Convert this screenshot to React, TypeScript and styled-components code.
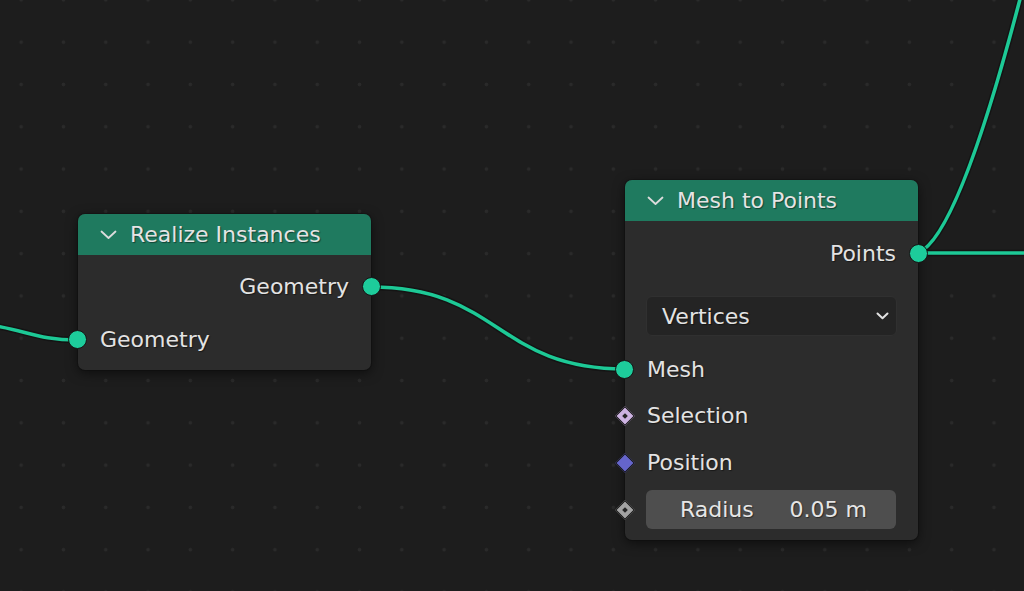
import React from "react";
import styled, { createGlobalStyle } from "styled-components";

const GlobalStyle = createGlobalStyle`
  html, body {
    margin: 0;
    padding: 0;
    background: #1d1d1d;
  }
  body {
    font-family: "DejaVu Sans", "Liberation Sans", sans-serif;
  }
`;

type SocketKind = {
  shape: "circle" | "diamond";
  color: string;
  dot?: boolean;
};

const GEO: SocketKind = { shape: "circle", color: "#1dcc9b" };
const BOOL: SocketKind = { shape: "diamond", color: "#cdb3e2", dot: true };
const VEC: SocketKind = { shape: "diamond", color: "#6565cb" };
const FLOAT: SocketKind = { shape: "diamond", color: "#a3a3a3", dot: true };

function App() {
  return (
    <>
      <GlobalStyle />
      <Canvas>
        <Wires width="1024" height="591" viewBox="0 0 1024 591">
          {[
            "M -60 322 C 20 322, 25 340, 77 340",
            "M 371 287 C 500 287, 496 369, 625 369",
            "M 918 253 C 950 240, 990 120, 1030 -40",
            "M 918 253 L 1030 253",
          ].map((d) => (
            <g key={d}>
              <path d={d} stroke="#141414" strokeWidth="6.5" fill="none" />
              <path d={d} stroke="#1dc996" strokeWidth="3.6" fill="none" />
            </g>
          ))}
        </Wires>

        <Node $x={78} $y={214}>
          <Header>
            <Chevron />
            <Title>Realize Instances</Title>
          </Header>
          <Body>
            <Row $side="out" $h={42}>
              Geometry
              <Socket $side="out" kind={GEO} />
            </Row>
            <Row $side="in" $h={42} $mt={11}>
              <Socket $side="in" kind={GEO} />
              Geometry
            </Row>
          </Body>
        </Node>

        <Node $x={625} $y={180}>
          <Header>
            <Chevron />
            <Title>Mesh to Points</Title>
          </Header>
          <Body $pb={7}>
            <Row $side="out" $h={44}>
              Points
              <Socket $side="out" kind={GEO} />
            </Row>
            <Dropdown>
              Vertices
              <SmallChevron />
            </Dropdown>
            <Row $side="in" $h={46} $mt={10}>
              <Socket $side="in" kind={GEO} />
              Mesh
            </Row>
            <Row $side="in" $h={47}>
              <Socket $side="in" kind={BOOL} />
              Selection
            </Row>
            <Row $side="in" $h={47}>
              <Socket $side="in" kind={VEC} />
              Position
            </Row>
            <Row $side="in" $h={47}>
              <Socket $side="in" kind={FLOAT} />
              <NumberField>
                <span>Radius</span>
                <span>0.05 m</span>
              </NumberField>
            </Row>
          </Body>
        </Node>
      </Canvas>
    </>
  );
}

export default App;

function Chevron() {
  return (
    <ChevronSvg width="17" height="10" viewBox="0 0 17 10">
      <polyline
        points="1.5,1.5 8.5,8 15.5,1.5"
        fill="none"
        stroke="#dcdcdc"
        strokeWidth="1.8"
        strokeLinecap="round"
        strokeLinejoin="round"
      />
    </ChevronSvg>
  );
}

function SmallChevron() {
  return (
    <svg width="13" height="8" viewBox="0 0 13 8">
      <polyline
        points="1.5,1.5 6.5,6.2 11.5,1.5"
        fill="none"
        stroke="#e2e2e2"
        strokeWidth="2"
        strokeLinecap="round"
        strokeLinejoin="round"
      />
    </svg>
  );
}

function Socket({ $side, kind }: { $side: "in" | "out"; kind: SocketKind }) {
  if (kind.shape === "circle") {
    return <Circle $side={$side} $color={kind.color} />;
  }
  return (
    <Diamond $side={$side} $color={kind.color}>
      {kind.dot && <Dot />}
    </Diamond>
  );
}

const Canvas = styled.div`
  position: relative;
  width: 1024px;
  height: 591px;
  overflow: hidden;
  background-color: #1d1d1d;
  background-image: radial-gradient(circle, #2a2a2a 1.5px, transparent 2.2px);
  background-size: 42.3px 42.3px;
  background-position: 0px 21px;
`;

const Wires = styled.svg`
  position: absolute;
  left: 0;
  top: 0;
`;

const Node = styled.div<{ $x: number; $y: number }>`
  position: absolute;
  left: ${(p) => p.$x}px;
  top: ${(p) => p.$y}px;
  width: 293px;
  border-radius: 7px;
  background: #2c2c2c;
  box-shadow: 0 3px 12px rgba(0, 0, 0, 0.55), 0 0 0 1px #181818;
  color: #e3e3e3;
  text-shadow: 1px 1px 1px rgba(0, 0, 0, 0.45);
`;

const Header = styled.div`
  height: 41px;
  display: flex;
  align-items: center;
  gap: 13px;
  padding-left: 22px;
  background: #1f7a5f;
  border-radius: 7px 7px 0 0;
`;

const ChevronSvg = styled.svg`
  margin-top: 1px;
`;

const Title = styled.div`
  font-size: 22px;
  color: #e4e4e4;
`;

const Body = styled.div<{ $pb?: number }>`
  display: flex;
  flex-direction: column;
  padding: 10px 0 ${(p) => p.$pb ?? 10}px;
`;

const Row = styled.div<{ $side: "in" | "out"; $h: number; $mt?: number }>`
  position: relative;
  height: ${(p) => p.$h}px;
  margin-top: ${(p) => p.$mt ?? 0}px;
  display: flex;
  align-items: center;
  justify-content: ${(p) => (p.$side === "out" ? "flex-end" : "flex-start")};
  padding: 0 22px;
  font-size: 22px;
`;

const Circle = styled.div<{ $side: "in" | "out"; $color: string }>`
  position: absolute;
  top: 50%;
  ${(p) => (p.$side === "out" ? "right: -10px;" : "left: -10px;")}
  width: 19px;
  height: 19px;
  margin-top: -9.5px;
  box-sizing: border-box;
  border-radius: 50%;
  background: ${(p) => p.$color};
  border: 1px solid #151515;
`;

const Diamond = styled.div<{ $side: "in" | "out"; $color: string }>`
  position: absolute;
  top: 50%;
  ${(p) => (p.$side === "out" ? "right: -7.5px;" : "left: -7.5px;")}
  width: 14px;
  height: 14px;
  margin-top: -7px;
  box-sizing: border-box;
  transform: rotate(45deg);
  background: ${(p) => p.$color};
  border: 1.5px solid #151515;
  display: flex;
  align-items: center;
  justify-content: center;
`;

const Dot = styled.div`
  width: 4px;
  height: 4px;
  background: #262626;
`;

const Dropdown = styled.div`
  margin: 21px 21px 0;
  height: 40px;
  box-sizing: border-box;
  display: flex;
  align-items: center;
  justify-content: space-between;
  padding: 0 7px 0 15px;
  background: #242424;
  border: 1px solid #303030;
  border-radius: 6px;
  font-size: 22px;
  color: #e3e3e3;
`;

const NumberField = styled.div`
  flex: 1;
  height: 39px;
  display: flex;
  align-items: center;
  justify-content: space-between;
  padding: 0 29px 0 34px;
  margin-left: -1px;
  background: #4e4e4e;
  border-radius: 6px;
  font-size: 22px;
  color: #e6e6e6;
`;
